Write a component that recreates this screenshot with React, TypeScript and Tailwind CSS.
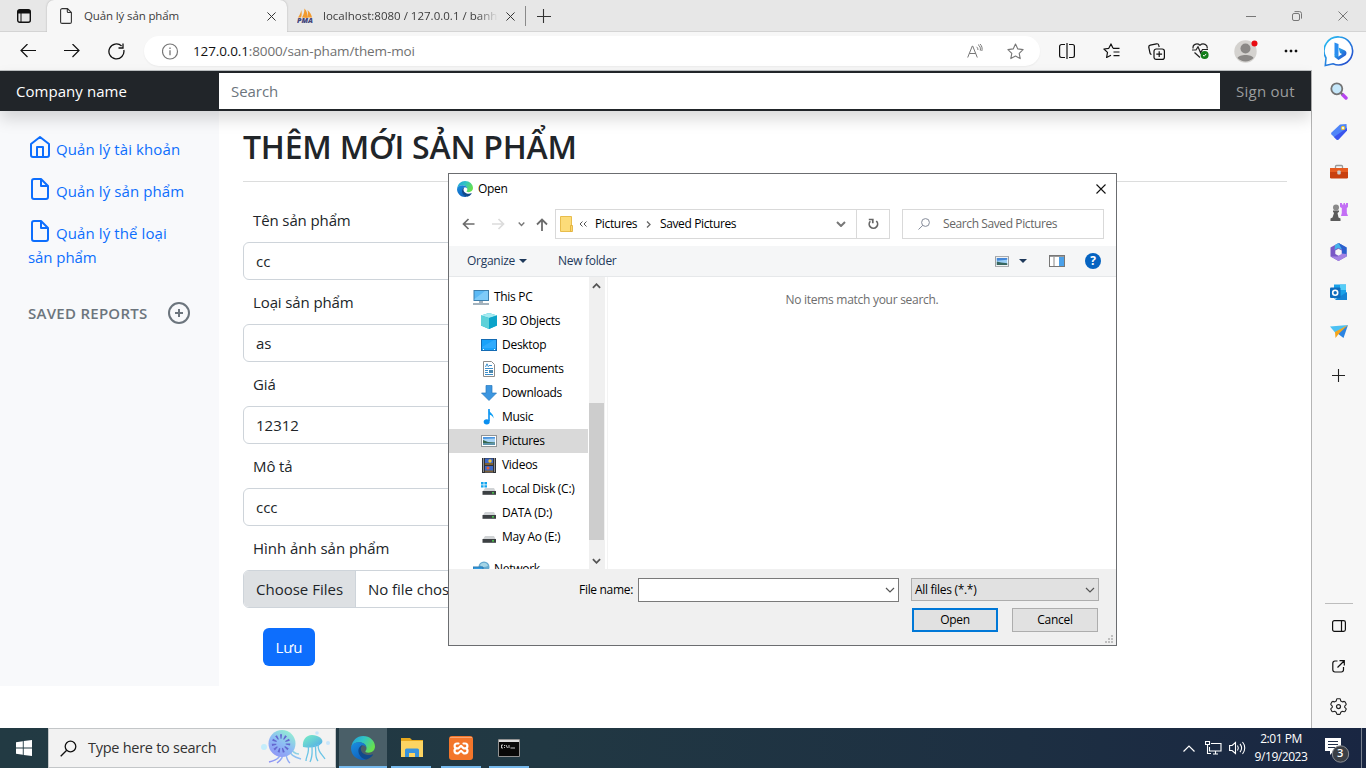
import React from "react";

type Kids = { children?: React.ReactNode };

function Svg({ w, h, box, children, c = "" }: { w: number; h: number; box?: string; c?: string } & Kids) {
  return (
    <svg width={w} height={h} viewBox={box ?? `0 0 ${w} ${h}`} fill="none" className={`block shrink-0 ${c}`}>
      {children}
    </svg>
  );
}

function EdgeLogo({ s }: { s: number }) {
  const id = `edge${s}`;
  return (
    <Svg w={s} h={s} box="0 0 24 24">
      <defs>
        <linearGradient id={`${id}a`} x1="0" y1="0" x2="1" y2=".5">
          <stop offset="0" stopColor="#1f9bdc" />
          <stop offset=".5" stopColor="#31c5c4" />
          <stop offset="1" stopColor="#66e04f" />
        </linearGradient>
        <linearGradient id={`${id}b`} x1="0" y1="0" x2=".6" y2="1">
          <stop offset="0" stopColor="#1b8fe0" />
          <stop offset="1" stopColor="#0f62bd" />
        </linearGradient>
      </defs>
      <path d="M.3 11C1.200 4.500 6 0 12 0c7 0 12 5 12 10.500 0 3.800-3 6.200-6.500 6.200-2.500 0-3.700-.9-3-1.700.8-.8 1-1.800 1-2.700 0-3.600-3.500-6-7.200-6C5 6.300 1.800 7.600.3 11z" fill={`url(#${id}a)`} />
      <path d="M0 12C.5 8 4 6.300 8.300 6.300c4 0 7.200 2.300 7.200 6-.3-1.800-2-3-3.800-3-1.700 0-3.200 1.500-3.200 3.700C8.500 18 12 22.500 15 23.600 8 25.500 0 20.500 0 12z" fill={`url(#${id}b)`} />
      <path d="M11.700 9.300C8.500 10 7 13 7.500 16c.7 4 4 7.200 8 7.500 2.500-.7 4.800-2.300 6.400-4.500.3-.5-.1-.8-.6-.6-1 .4-2 .7-3.500.7-4.500 0-8-2.600-8-6 0-1.500.7-3 1.900-3.800z" fill="#114a8b" />
    </Svg>
  );
}

function XMark({ s = 9, c = "#333", sw = 1.1 }: { s?: number; c?: string; sw?: number }) {
  return (
    <Svg w={s} h={s} box="0 0 10 10">
      <path d="M.5.5l9 9M9.500.5l-9 9" stroke={c} strokeWidth={sw} />
    </Svg>
  );
}

function TabStrip() {
  return (
    <div className="flex h-8 shrink-0 bg-[#e7e7e7] shadow-[inset_0_-1px_0_#d4d4d4]">
      <div className="flex w-[47px] items-center pl-[17px]">
        <Svg w={14} h={14}>
          <rect x=".7" y=".7" width="12.600" height="12.600" rx="2" stroke="#111" strokeWidth="1.400" />
          <path d="M1 1h12v3.500H1z" fill="#111" />
          <path d="M4 4v9" stroke="#111" strokeWidth="1" />
        </Svg>
      </div>
      <div className="flex w-[240px] items-center rounded-t-[7px] bg-[#f7f7f7] pl-[13px] shadow-[0_0_2px_#aaa]">
        <Svg w={12} h={16}>
          <path d="M2 .6h5.500L11.400 4.500v9.400a1.500 1.500 0 0 1-1.500 1.500H2.100A1.500 1.500 0 0 1 .6 13.900V2.100A1.500 1.500 0 0 1 2.100.6zM7.300.8v2.700a1 1 0 0 0 1 1h3" stroke="#333" strokeWidth="1.100" />
        </Svg>
        <span className="ml-3 w-[183px] text-[11.500px] tracking-[-0.13px] text-[#3c3c3c]">Quản lý sản phẩm</span>
        <XMark />
      </div>
      <div className="flex w-[238px] items-center pl-[10px]">
        <Svg w={17} h={16}>
          <path d="M1 9.500C3 7 4 4 4.200 2 5 5 4.800 7.500 4 9.500zM5 9.500C7 6 7.500 3 7.400.5 10 3 11 7 10.500 10zM10.500 9.500C11.300 7 11 4 10.500 2 13 4 14.500 7 15 9.500z" fill="#f29a2e" />
          <text x="0" y="15.400" fontSize="6.400" fontWeight="800" fontStyle="italic" fill="#44467c" textLength="16" lengthAdjust="spacingAndGlyphs">PMA</text>
        </Svg>
        <span className="ml-[9px] w-[175px] overflow-hidden whitespace-nowrap text-[11.500px] tracking-[0.01px] text-[#3c3c3c] [mask-image:linear-gradient(90deg,#000_88%,transparent)]">localhost:8080 / 127.0.0.1 / banh</span>
        <span className="ml-[8px]"><XMark /></span>
      </div>
      <div className="flex flex-1 items-center">
        <div className="h-5 w-px bg-[#8a8a8a]" />
        <Svg w={14} h={14} c="ml-[11px]"><path d="M6.500 0v14M0 7.500h14" stroke="#333" strokeWidth="1.100" /></Svg>
      </div>
      <div className="flex w-[138px]">
        <div className="flex w-[46px] items-center justify-center"><div className="h-px w-[10px] bg-[#777]" /></div>
        <div className="flex w-[46px] items-center justify-center">
          <Svg w={10} h={10}><rect x=".5" y="2.500" width="7" height="7" rx="1.500" stroke="#777" /><path d="M2.500.6H7.500a2 2 0 0 1 2 2v5" stroke="#777" /></Svg>
        </div>
        <div className="flex w-[46px] items-center justify-center"><XMark s={10} c="#777" sw={1} /></div>
      </div>
    </div>
  );
}

function Cell({ w, children }: { w: string } & Kids) {
  return <div className={`flex shrink-0 items-center justify-center ${w}`}>{children}</div>;
}

function Toolbar() {
  return (
    <div className="flex h-[38px] shrink-0 bg-[#f7f7f7] pl-[6px]">
      <Cell w="w-11"><Svg w={16} h={14}><path d="M16 6.500H1M7.500 0L1 6.500l6.500 6.500" stroke="#111" strokeWidth="1.200" /></Svg></Cell>
      <Cell w="w-11"><Svg w={16} h={14}><path d="M0 6.500h15M8.500 0L15 6.500l-6.500 6.500" stroke="#111" strokeWidth="1.200" /></Svg></Cell>
      <Cell w="w-11"><Svg w={17} h={17}><path d="M15.800 7A7.500 7.500 0 1 1 13.600 3M15 .5V5h-4.500" stroke="#111" strokeWidth="1.300" /></Svg></Cell>
      <div className="ml-[6px] mt-1 flex h-[30px] w-[896px] shrink-0 items-center rounded-full bg-white pl-[18px] shadow-[0_1px_2px_rgba(0,0,0,0.05)]">
        <Svg w={17} h={17}><circle cx="8" cy="8.500" r="7.500" stroke="#777" strokeWidth="1.200" /><path d="M8 7.300v5M8 4.500v1.500" stroke="#777" strokeWidth="1.300" /></Svg>
        <span className="ml-[14px] flex-1 text-[13.500px] tracking-[-0.13px] text-[#707070]"><span className="text-[#111]">127.0.0.1</span>:8000/san-pham/them-moi</span>
        <Cell w="w-10"><Svg w={16} h={15}><path d="M.7 13.500L5.300 2h.4l4.600 11.500M2.300 9.500h6.400M9.500 2.800c1 .8 1.500 2 1.400 3.200M11 .6c2 1.300 2.800 3.500 2.300 6M13 0c2 1.800 2.600 4.600 1.800 7" stroke="#777" strokeWidth="1" /></Svg></Cell>
        <Cell w="w-10"><Svg w={17} h={17}><path d="M8.500 1l2.300 4.900 5.300.7-3.900 3.700 1 5.300-4.700-2.600-4.700 2.600 1-5.300L.9 6.600l5.300-.7z" stroke="#777" strokeLinejoin="round" strokeWidth="1.100" /></Svg></Cell>
        <span className="w-[5px]" />
      </div>
      <div className="ml-[4px] flex">
        <Cell w="w-[45px]"><Svg w={16} h={16}><path d="M6 1.500H2.500A1.900 1.900 0 0 0 .6 3.400v9.200a1.900 1.900 0 0 0 1.900 1.900H6M10 1.500h3.500a1.900 1.900 0 0 1 1.900 1.900v9.200a1.900 1.900 0 0 1-1.900 1.900H10M8 0v16" stroke="#111" strokeWidth="1.200" /></Svg></Cell>
        <Cell w="w-[45px]"><Svg w={17} h={16}><path d="M10 5.300L8 .9 5.800 5.300.9 6l3.600 3.400-.9 5.100L8 12.200M10 5.300h6.500M10.500 9h6M10.500 12.700h6" stroke="#111" strokeLinejoin="round" strokeWidth="1.200" /></Svg></Cell>
        <Cell w="w-[44px]"><Svg w={17} h={17}><rect x="6" y="6" width="10.400" height="10.400" rx="2.200" stroke="#111" strokeWidth="1.200" /><path d="M11.200 8.300v5.800M8.300 11.200h5.800M3.500 11.500A2 2 0 0 1 2 10L.8 4.500A2 2 0 0 1 2.300 2.200L8.500.8A2 2 0 0 1 10.800 2.400L11.200 4" stroke="#111" strokeWidth="1.200" /></Svg></Cell>
        <Cell w="w-[45px]"><Svg w={17} h={18}><path d="M1.200 6.500C0 2.500 5 .5 8 3.200c3-2.700 8.200-.7 7 3.300M0 8h4l2-3.200 2.600 6L10.500 7.500H16M2.500 10.500L8 15.500" stroke="#222" strokeWidth="1.200" /><circle cx="12.600" cy="13" r="4" fill="#137c19" /><path d="M11 13.200l1.200 1 2-2.300" stroke="#fff" strokeWidth="1" /></Svg></Cell>
        <Cell w="w-[45px]"><Svg w={24} h={24}><circle cx="11.500" cy="12.500" r="11.200" fill="#d4d2cf" /><circle cx="11.500" cy="9.500" r="5" fill="#8a8886" /><path d="M3.500 19c1.500-4 14.500-4 16 0a11 11 0 0 1-16 0z" fill="#8a8886" /><circle cx="20.500" cy="4.500" r="3" fill="#e90b12" /></Svg></Cell>
        <Cell w="w-[46px]"><Svg w={14} h={4}><path d="M1 1h2v2H1zM6 1h2v2H6zM11 1h2v2h-2z" fill="#111" stroke="#111" strokeWidth=".5" /></Svg></Cell>
      </div>
    </div>
  );
}

function BrowserSidebar() {
  return (
    <div className="z-10 flex w-[54px] shrink-0 flex-col items-center bg-[#f7f7f7] pr-px">
      <Cell w="h-[38px]">
        <Svg w={31} h={31} c="ml-px">
          <defs><linearGradient id="bg1" x1="0" y1="0" x2="1" y2="1"><stop stopColor="#27c4f5" /><stop offset="1" stopColor="#2541c9" /></linearGradient></defs>
          <path d="M15.500 1A14 14 0 1 1 9 27.800L1.300 29.500 2 22A14 14 0 0 1 15.500 1z" fill="#fff" stroke="url(#bg1)" strokeWidth="1.600" />
          <path d="M10.500 6.500l4 1.500v13l-4-2.500z" fill="#2a8df0" />
          <path d="M14.500 11.500l6.500 3c1.800 1 2 3.500.5 5L14.500 24 10.500 21v-3l4 2.500 3.500-2.500-2-1z" fill="url(#bg1)" />
        </Svg>
      </Cell>
      <Cell w="h-[42px]"><Svg w={18} h={18}><path d="M12.500 12.500l3.500 3.500" stroke="#b743f1" strokeWidth="3.400" strokeLinecap="round" /><path d="M10 10l2.500 2.500" stroke="#777" strokeWidth="2" /><circle cx="6.800" cy="6.800" r="5.500" fill="#c5e7fa" stroke="#747474" strokeWidth="1.800" /></Svg></Cell>
      <Cell w="h-[40px]"><Svg w={18} h={18}><path d="M10 1.500L16.500 1 17 7.500 8.500 16.500a1.500 1.500 0 0 1-2 0L1.500 11.500a1.500 1.500 0 0 1 0-2z" fill="#4f85f8" /><path d="M4 14L17 5v2.500L8.500 16.500a1.500 1.500 0 0 1-2 0z" fill="#3b55ee" /><circle cx="13" cy="5" r="1.700" fill="#eee" stroke="#eec72b" /></Svg></Cell>
      <Cell w="h-[40px]"><Svg w={18} h={16}><path d="M5.500 4V2.500A1 1 0 0 1 6.500 1.500h5a1 1 0 0 1 1 1V4" stroke="#999" strokeWidth="1.300" /><rect x="0" y="4" width="18" height="10.500" rx="1.200" fill="#c8400f" /><path d="M0 4h18v4H0z" fill="#e65b20" /><rect x="7.300" y="6.500" width="3.400" height="4" rx="1" fill="#ccc" /></Svg></Cell>
      <Cell w="h-[40px]"><Svg w={18} h={18}><path d="M10 0h2v1.500h1.500V0H15v1.500h1V0h2v4l-1.200 1v5l1.200 3h-7l.8-3V5L10 4z" fill="#c36ff5" /><circle cx="6" cy="4.500" r="3" fill="#8a8a8a" /><path d="M3 7.500h6v1.200L7.500 10l1 4.500 2 1V18H.5v-2.500l2-1L4 10 3 8.700z" fill="#5b5b5b" /></Svg></Cell>
      <Cell w="h-[40px]">
        <Svg w={17} h={18}>
          <path d="M8.500 0L16.500 4.500v9L8.500 18l-8-4.500v-9z" fill="#7a58c6" />
          <path d="M5 2L8.500 0l8 4.500v5L12 11V6.500L8 5 4.500 7z" fill="#45b2ea" />
          <path d="M8.500 0l8 4.500v9L12 11V6.500z" fill="#2d5fcd" />
          <path d="M.8 13.600L8.500 18l8-4.500V11L12 10.500l-4 3z" fill="#a583e4" />
          <path d="M8.500 5.700l3.200 1.800v3.500l-3.200 1.800L5.300 11V7.500z" fill="#f7f7f7" />
        </Svg>
      </Cell>
      <Cell w="h-[40px]"><Svg w={17} h={17}><path d="M4 .5h12v14H4z" fill="#1aa1e8" /><path d="M10 .5h6v5.500h-6z" fill="#56cdf7" /><path d="M5 15.500L17 8v8H6z" fill="#1583d4" /><rect x="0" y="3.500" width="10.500" height="10.500" rx="1" fill="#0f6cbd" /><circle cx="5.200" cy="8.700" r="2.500" stroke="#fff" strokeWidth="1.600" /></Svg></Cell>
      <Cell w="h-[38px]"><Svg w={18} h={15}><path d="M0 2.500L18 1 5.500 9z" fill="#4cc1f3" /><path d="M18 1l-4.500 13L7 9z" fill="#2b84e2" /><path d="M18 1L5 8l.5 6L9 9.500z" fill="#f4a51c" /></Svg></Cell>
      <Cell w="h-[50px]"><Svg w={13} h={13}><path d="M6.500 0v13M0 6.500h13" stroke="#222" strokeWidth="1.100" /></Svg></Cell>
      <div className="flex-1" />
      <div className="h-px w-7 bg-[#bdbdbd]" />
      <Cell w="h-[44px]"><Svg w={14} h={12}><rect x=".6" y=".6" width="12.800" height="10.800" rx="1.800" stroke="#111" strokeWidth="1.200" /><path d="M9.500.5v11" stroke="#111" strokeWidth="1.200" /></Svg></Cell>
      <Cell w="h-[36px]"><Svg w={13} h={13}><path d="M5.500 1H3A2.300 2.300 0 0 0 .8 3.200v6.600A2.300 2.300 0 0 0 3 12h6.300a2.300 2.300 0 0 0 2.200-2.200V7M7.500.7h4.800v4.800M12 1L5.500 7.500" stroke="#111" strokeWidth="1.200" /></Svg></Cell>
      <Cell w="h-[44px]"><Svg w={17} h={17}><path d="M6.700 1.200l.5-.5h2.600l.5.5.5 1.800 1.500.9 1.900-.5.8.3 1.200 2.200-.1.800L14.700 8.100v1.200l1.400 1.300.1.700-1.200 2.200-.8.300-1.900-.5-1.500.9-.5 1.700-.5.5H7.200l-.5-.5-.5-1.700-1.500-.9-1.900.5-.8-.3-1.200-2.200.1-.7 1.400-1.300V8.100L.9 6.700l-.1-.8L2 3.700l.8-.3 1.900.5L6.200 3z" stroke="#222" strokeLinejoin="round" strokeWidth="1.100" /><circle cx="8.500" cy="8.600" r="2" stroke="#222" strokeWidth="1.200" /></Svg></Cell>
    </div>
  );
}

function HomeIcon() {
  return <Svg w={24} h={24} c="mr-1 inline-block align-[-4px]"><path d="M3 9l9-7 9 7v11a2 2 0 0 1-2 2H5a2 2 0 0 1-2-2zM9 22V12h6v10" stroke="#0d6efd" strokeWidth="2" strokeLinejoin="round" /></Svg>;
}

function FileIcon() {
  return <Svg w={24} h={24} c="mr-1 inline-block align-[-4px]"><path d="M13 2H6a2 2 0 0 0-2 2v16a2 2 0 0 0 2 2h12a2 2 0 0 0 2-2V9zM13 2v7h7" stroke="#0d6efd" strokeWidth="2" strokeLinejoin="round" /></Svg>;
}

function Field({ label, value }: { label: string; value: string }) {
  return (
    <div className="h-[82px]">
      <div className="flex h-[44px] items-center pl-[10px] text-[15px] tracking-[-0.11px]">{label}</div>
      <div className="flex h-[38px] items-center rounded-md border border-[#ced4da] px-3 text-[15px]">{value}</div>
    </div>
  );
}

function WebPage() {
  return (
    <div className="flex w-[1312px] flex-col border-r border-t border-[#b5b5b5] border-t-[#bdc1c3] bg-white text-[#212529]">
      <div className="z-10 flex h-10 shrink-0 items-stretch bg-[#212529] py-[2px] shadow-[0_8px_16px_rgba(0,0,0,0.15)]">
        <div className="flex w-[219px] items-center pl-4 text-[15px] tracking-[0.05px] text-white">Company name</div>
        <div className="flex w-[1001px] items-center bg-white pl-3 text-[15px] tracking-[-0.05px] text-[#6c757d]">Search</div>
        <div className="flex items-center pl-4 text-[15px] tracking-[0.25px] text-[#9b9d9e]">Sign out</div>
      </div>
      <div className="flex flex-1">
        <div className="h-[575px] w-[219px] bg-[#f8f9fb] pl-7 pt-[24px] text-[15px] leading-6 tracking-[0.1px] text-[#0d6efd]">
          <div className="h-[42px] whitespace-nowrap"><HomeIcon />Quản lý tài khoản</div>
          <div className="h-[42px] whitespace-nowrap"><FileIcon />Quản lý sản phẩm</div>
          <div className="h-[66px]"><FileIcon />Quản lý thể loại<br /><span className="tracking-[-0.06px]">sản phẩm</span></div>
          <div className="mt-[16px] flex h-6 items-center font-semibold tracking-[0.27px] text-[#6c757d]">
            <span className="w-[139px] whitespace-nowrap">SAVED REPORTS</span>
            <Svg w={24} h={24}><circle cx="12" cy="12" r="10" stroke="#6c757d" strokeWidth="2" /><path d="M12 8v8M8 12h8" stroke="#6c757d" strokeWidth="2" /></Svg>
          </div>
        </div>
        <div className="flex-1 px-6 pt-4">
          <div className="h-[55px] border-b border-[#dcdddd] text-[32px] font-semibold leading-[40px] tracking-[-0.22px]">THÊM MỚI SẢN PHẨM</div>
          <div className="w-[522px] pt-4">
            <Field label="Tên sản phẩm" value="cc" />
            <Field label="Loại sản phẩm" value="as" />
            <Field label="Giá" value="12312" />
            <Field label="Mô tả" value="ccc" />
            <div className="flex h-[44px] items-center pl-[10px] text-[15px] tracking-[-0.03px]">Hình ảnh sản phẩm</div>
            <div className="flex h-[38px] items-stretch overflow-hidden rounded-md border border-[#ced4da] text-[15px]">
              <div className="flex w-[112px] items-center border-r border-[#ced4da] bg-[#dde0e3] pl-3">Choose Files</div>
              <div className="flex items-center pl-[12px] tracking-[-0.05px]">No file chosen</div>
            </div>
            <div className="ml-5 mt-5 flex h-[38px] w-[52px] items-center justify-center rounded-md bg-[#0d6efd] text-[15px] text-white">Lưu</div>
          </div>
        </div>
      </div>
    </div>
  );
}

function Photo() {
  return <Svg w={16} h={12}><rect x=".5" y=".5" width="15" height="11" fill="#fff" stroke="#8f9396" /><path d="M2 2h12v8H2z" fill="#a9d4f5" /><path d="M2 2h12v1.500L2 4z" fill="#4c96e0" /><path d="M2 5l5 2 7 .5v1H2z" fill="#37664f" /><path d="M2 8.300h12V10H2z" fill="#5b93ac" /></Svg>;
}

function Drive({ win = false }: { win?: boolean }) {
  return <Svg w={16} h={14}>{win && <path d="M0 0h2.600v2.400H0zM3.400 0H6v2.400H3.400zM0 3.200h2.600v2.400H0zM3.400 3.200H6v2.400H3.400z" fill="#13a5ee" />}<path d="M4 6h9l1.500 3H2z" fill="#d0d3d5" /><path d="M1.500 9h13.500v3.800H1.500z" fill="#3c4043" /><path d="M11 10.300h2v1.300h-2z" fill="#4be04b" /></Svg>;
}

const tree: [string, React.ReactNode][] = [
  ["3D Objects", <Svg w={16} h={16}><path d="M8 0l8 2.500v10L8 16 0 12.500v-10z" fill="#18b0d0" /><path d="M0 2.500L8 0l8 2.500L8 5z" fill="#a4eaf0" /><path d="M0 2.500L8 5v11L0 12.500z" fill="#5ed1d9" /><path d="M8 5l8-2.500v10L8 16z" fill="#0ba3c9" /></Svg>],
  ["Desktop", <Svg w={16} h={12}><rect x=".5" y=".5" width="15" height="11" fill="#19a2fa" stroke="#146bb3" /><path d="M1 8L13 1h2v8H1z" fill="#45b4ff" opacity=".5" /><path d="M2 10.500h1M13 10.500h1" stroke="#fff" /></Svg>],
  ["Documents", <Svg w={12} h={16}><path d="M.5.5h8L11.500 3.500v12H.5z" fill="#fff" stroke="#8c8c8c" /><path d="M2.500 6L4 2.800 5.500 6M6 4.500h3M2 7.500h8M2 9.500h3M2 11.500h3M2 13.500h8" stroke="#3b8dc9" /><path d="M6 9h4v3H6z" fill="#4b87ad" /></Svg>],
  ["Downloads", <Svg w={16} h={16}><path d="M5 .5h6V8h4.500L8 15.500.5 8H5z" fill="#3c96e0" stroke="#2778bd" strokeWidth=".7" /></Svg>],
  ["Music", <Svg w={12} h={16}><path d="M6 0v12" stroke="#0a8ff0" strokeWidth="1.600" /><ellipse cx="3.700" cy="12.800" rx="3" ry="2.600" fill="#0a8ff0" /><path d="M5.500 0c.5 4 5.500 4 5 9.500C10 7 8 6 6 5.500z" fill="#0a9ef5" /></Svg>],
  ["Pictures", <Photo />],
  ["Videos", <Svg w={14} h={15}><path d="M0 0h14v15H0z" fill="#303236" /><path d="M3 .5h8v6.500H3zM3 8h8v6.500H3z" fill="#3c68c8" /><path d="M3 5h8v2H3zM3 12.500h8v2H3z" fill="#7b6035" /><circle cx="8" cy="3" r="1.700" fill="#f3c535" /><circle cx="6" cy="10" r="1.500" fill="#df5e37" /><path d="M1.500.5v14M12.500.5v14" stroke="#eee" strokeWidth="1" strokeDasharray="1 1" /></Svg>],
  ["Local Disk (C:)", <Drive win />],
  ["DATA (D:)", <Drive />],
  ["May Ao (E:)", <Drive />],
];

function Chev({ w = 9, c = "#555", up = false, sw = 1.6 }: { w?: number; c?: string; up?: boolean; sw?: number }) {
  return <Svg w={w} h={6} box="0 0 10 6"><path d={up ? "M1 5l4-4 4 4" : "M1 1l4 4 4-4"} stroke={c} strokeWidth={sw} /></Svg>;
}

function OpenDialog() {
  return (
    <div className="absolute left-[448px] top-[173px] z-20 flex h-[473px] w-[669px] flex-col border border-[#6b6d70] bg-white text-[12px] tracking-[-0.28px] text-black">
      <div className="flex h-[29px] shrink-0 items-center pl-2 pr-[10px]">
        <EdgeLogo s={16} />
        <span className="ml-[5px] flex-1">Open</span>
        <XMark s={10} c="#111" sw={1.1} />
      </div>
      <div className="flex h-[43px] shrink-0 pb-[7px] pt-[6px]">
        <div className="flex w-[106px] items-center pl-[13px]">
          <Svg w={13} h={12}><path d="M12.500 6H1.500M6.500 1l-5 5 5 5" stroke="#6c6c6c" strokeWidth="1.700" /></Svg>
          <Svg w={13} h={12} c="ml-[17px]"><path d="M0 6h11.500M6.500 1l5 5-5 5" stroke="#dcdcdc" strokeWidth="1.700" /></Svg>
          <span className="ml-[13px]"><Chev w={7} c="#777" sw={2} /></span>
          <Svg w={12} h={13} c="ml-[11px]"><path d="M6 13V1.500M1 6.500l5-5 5 5" stroke="#6c6c6c" strokeWidth="1.800" /></Svg>
        </div>
        <div className="flex w-[335px] border border-[#d9d9d9]">
          <div className="flex w-[302px] items-center border-r border-[#d9d9d9] pl-1 pr-[10px]">
            <Svg w={14} h={16}><path d="M.5.5h11v15H.5z" fill="#fcdc79" stroke="#e8bd4c" /><path d="M10.500 9.500h2v6h-2z" fill="#fbd76b" stroke="#e0ac34" strokeWidth=".8" /></Svg>
            <Svg w={8} h={6} c="ml-[5px]"><path d="M3.500.5L1 3l2.500 2.500M7.500.5L5 3l2.500 2.500" stroke="#555" /></Svg>
            <span className="ml-2 w-[42px] whitespace-nowrap tracking-[-0.35px]">Pictures</span>
            <Svg w={5} h={7} c="mx-[9px]"><path d="M1 .5l3 3-3 3" stroke="#666" strokeWidth="1.300" /></Svg>
            <span className="flex-1 tracking-[-0.38px]">Saved Pictures</span>
            <Chev w={10} c="#777" sw={2} />
          </div>
          <Cell w="w-8"><Svg w={11} h={12}><path d="M8.300 3A4.200 4.200 0 1 1 2.300 3.200M.8 1.500h4v3.800" stroke="#666" strokeWidth="1.700" /></Svg></Cell>
        </div>
        <div className="ml-3 flex w-[202px] items-center border border-[#d9d9d9] pl-[15px] text-[#666]">
          <Svg w={12} h={12}><circle cx="7.500" cy="4.500" r="3.900" stroke="#858b99" /><path d="M4.800 7.300L.5 11.500" stroke="#858b99" /></Svg>
          <span className="ml-[13px] tracking-[-0.4px]">Search Saved Pictures</span>
        </div>
      </div>
      <div className="flex h-[31px] shrink-0 items-center border-b border-[#e6e8ea] bg-[#f5f6f7] pl-[18px] text-[#1e395b]">
        <span className="w-[52px]">Organize</span>
        <Svg w={8} h={4}><path d="M0 0h8L4 4z" fill="#1e395b" /></Svg>
        <span className="ml-[31px] w-[437px] tracking-[-0.3px]">New folder</span>
        <Svg w={14} h={11} box="0 0 16 12"><rect x=".5" y=".5" width="15" height="11" fill="#fff" stroke="#8f9396" /><path d="M2 2h12v8H2z" fill="#9bcef5" /><path d="M2 2h12v2L2 5z" fill="#4487d8" /><path d="M2 6l5 1 7 1v2H2z" fill="#37665f" /></Svg>
        <Svg w={8} h={4} c="ml-[10px]"><path d="M0 0h8L4 4z" fill="#1e395b" /></Svg>
        <Svg w={16} h={12} c="ml-[22px]"><rect x=".5" y=".5" width="15" height="11" fill="#fff" stroke="#777" /><path d="M1 1.500h14" stroke="#999" /><path d="M5 2v9" stroke="#888" /><path d="M10 2h5v9h-5z" fill="#4ba1ea" /></Svg>
        <div className="ml-5 flex size-4 items-center justify-center rounded-full bg-[#0563c1] text-[12px] font-bold text-white">?</div>
      </div>
      <div className="flex h-[292px] shrink-0">
        <div className="h-full w-[139px] shrink-0 overflow-hidden pt-2">
          <div className="flex h-6 items-center pl-6">
            <Svg w={16} h={15}><rect x="1" y=".5" width="14.500" height="10" fill="#5bb9f5" stroke="#3c7eac" /><path d="M1.500 9L12 1h3v9H1.500z" fill="#8dd3fb" opacity=".7" /><path d="M6 12h4M0 14h16" stroke="#8599a8" strokeWidth="1.300" /></Svg>
            <span className="ml-[5px] tracking-[-0.3px]">This PC</span>
          </div>
          {tree.map(([name, icon]) => (
            <div key={name} className={`flex h-6 items-center pl-8 ${name === "Pictures" ? "bg-[#d9d9d9]" : ""}`}>
              <div className="flex w-4 justify-center">{icon}</div>
              <span className="ml-[5px] whitespace-nowrap">{name}</span>
            </div>
          ))}
          <div className="mt-2 flex h-6 items-center pl-6">
            <Svg w={17} h={16}><circle cx="11" cy="6" r="5.500" fill="#65a9cf" /><path d="M7 4c2-3 7-3 8 1-3 1-6 2-8-1z" fill="#a4d4e6" /><path d="M0 6h10v8H0z" fill="#339be0" stroke="#2b78af" /></Svg>
            <span className="ml-[4px]">Network</span>
          </div>
        </div>
        <div className="ml-px flex w-[16px] shrink-0 flex-col items-center bg-[#f0f0f0]">
          <div className="flex h-[126px] w-[15px] shrink-0 justify-center self-start pt-[6px]"><Chev c="#555" up sw={2} /></div>
          <div className="h-[137px] w-[15px] shrink-0 self-start bg-[#cdcdcd]" />
          <div className="flex w-[15px] flex-1 justify-center self-start pt-[18px]"><Chev c="#555" sw={2} /></div>
        </div>
        <div className="ml-[2px] flex-1 border-l border-[#f3f3f3] pt-[14px] text-center text-[#6d6d6d]"><span>No items match your search.</span></div>
      </div>
      <div className="flex flex-1 flex-col bg-[#f0f0f0]">
        <div className="flex pt-[9px]">
          <span className="w-[189px] pr-[5px] pt-[3px] text-right tracking-[-0.32px]">File name:</span>
          <div className="flex h-6 w-[261px] items-center justify-end border border-[#7a7a7a] bg-white pr-[3px]"><Chev w={10} sw={1.200} /></div>
          <div className="ml-3 flex h-[23px] w-[188px] items-center justify-between border border-[#adadad] bg-[#e1e1e1] pl-[3px] pr-[3px]"><span className="tracking-[-0.3px]">All files (*.*)</span><Chev w={10} sw={1.200} /></div>
        </div>
        <div className="flex pl-[463px] pt-[6px]">
          <div className="flex h-6 w-[86px] items-center justify-center border-2 border-[#0078d7] bg-[#e1e1e1]">Open</div>
          <div className="ml-[14px] flex h-6 w-[86px] items-center justify-center border border-[#adadad] bg-[#e1e1e1]">Cancel</div>
        </div>
        <Svg w={8} h={8} c="ml-auto mr-[3px] mt-[3px]"><path d="M6 0h2v2H6zM3 3h2v2H3zM6 3h2v2H6zM0 6h2v2H0zM3 6h2v2H3zM6 6h2v2H6z" fill="#bfbfbf" /></Svg>
      </div>
    </div>
  );
}

function TaskApp({ c, bar, children }: { c: string; bar: string } & Kids) {
  return (
    <div className={`flex h-10 shrink-0 flex-col items-center ${c}`}>
      <div className="flex flex-1 items-center pt-[1px]">{children}</div>
      <div className={`h-[2px] bg-[#76b9ed] ${bar}`} />
    </div>
  );
}

function Taskbar() {
  return (
    <div className="flex h-10 shrink-0 bg-[linear-gradient(90deg,#223a43_0%,#213843_40%,#1d2f42_75%,#192642_100%)]">
      <Cell w="w-12"><Svg w={16} h={16}><path d="M0 2.200L6.800 1.200v6.300H0zM7.700 1.100L16 0v7.500H7.700zM0 8.400h6.800v6.400L0 13.800zM7.700 8.400H16V16l-8.300-1.100z" fill="#fff" /></Svg></Cell>
      <div className="flex w-[288px] shrink-0 items-center border border-[#c3c6c8] bg-[#f2f2f2] pl-[11px]">
        <Svg w={17} h={17}><circle cx="10.500" cy="6.500" r="5.300" stroke="#111" strokeWidth="1.300" /><path d="M6.700 10.300L.7 16.300" stroke="#111" strokeWidth="1.300" /></Svg>
        <span className="ml-[11px] w-[173px] shrink-0 text-[14.500px] tracking-[-0.27px] text-[#333]">Type here to search</span>
        <Svg w={74} h={38}>
          <defs>
            <linearGradient id="jf" x1=".2" y1="1" x2=".8" y2="0"><stop stopColor="#8f94f5" /><stop offset=".5" stopColor="#8dbcf5" /><stop offset="1" stopColor="#93f2cf" /></linearGradient>
            <linearGradient id="jg" x1="0" y1="0" x2="1" y2="1"><stop stopColor="#79f0c4" /><stop offset="1" stopColor="#51a7ea" /></linearGradient>
          </defs>
          <circle cx="3" cy="18" r="3" fill="#c4edfb" /><circle cx="56" cy="4" r="1.800" fill="#c7e5fb" /><circle cx="67" cy="14" r="2" fill="#c7e5fb" />
          <path d="M20 20c0 8-3 11-12 13M22 20c1 8-2 11-6 14M24 20c1 8 2 12 5 14M27 19c2 7 6 9 13 11M29 17c2 6 6 8 9 8" stroke="url(#jf)" strokeWidth="1.500" />
          <circle cx="21" cy="14.500" r="13.500" fill="url(#jf)" />
          <circle cx="20" cy="14.500" r="7" stroke="#6367cf" strokeWidth="4.500" strokeDasharray="1.600 2.400" />
          <path d="M42 18c-1-7 3-12 9-12s12 4 10 8c-5 5-11 5-19 4z" fill="url(#jg)" />
          <path d="M47 17c2 6-2 10-2 15M51 17c0 7 1 10-2 16M54 16c2 7-1 11 3 16M57 15c0 8 3 9 7 15" stroke="#69c4e6" strokeWidth="1.300" />
        </Svg>
      </div>
      <TaskApp c="ml-[3px] w-12 bg-[#4a5f68]" bar="w-12"><EdgeLogo s={24} /></TaskApp>
      <TaskApp c="w-12" bar="w-10">
        <Svg w={22} h={19} c="ml-px"><path d="M0 0h9l2 2h11v17H0z" fill="#e8a91e" /><path d="M0 3h22v16H0z" fill="#fcd462" /><path d="M4 19v-7a1.500 1.500 0 0 1 1.500-1.500h11A1.500 1.500 0 0 1 18 12v7h-4v-4H8v4z" fill="#3893de" /></Svg>
      </TaskApp>
      <TaskApp c="w-[51px]" bar="w-10">
        <Svg w={24} h={24}>
          <rect width="24" height="24" rx="3" fill="#f3762b" />
          <path d="M1 1.500h22" stroke="#f8a573" />
          <path d="M9.500 7.500H8a2.400 2.400 0 0 0 0 4.800 2.500 2.500 0 0 0 0 5h1.300L12 14.800l2.700 2.500H16a2.500 2.500 0 0 0 0-5 2.400 2.400 0 0 0 0-4.800h-1.500M8 12.300h1.500L12 9.800l2.500 2.500H16" stroke="#fff" strokeWidth="2.200" strokeLinecap="round" strokeLinejoin="round" />
        </Svg>
      </TaskApp>
      <TaskApp c="w-[46px]" bar="w-10">
        <Svg w={22} h={18}><path d="M.5.5h21v17H.5z" fill="#080808" stroke="#929292" /><path d="M1 1h20v2H1z" fill="#ddd" /><path d="M5 6H3.500v3H5M6.500 6v1M6.500 8v1M8 6l1.500 3M11 6v3M12.500 9H17" stroke="#ddd" strokeWidth=".9" /></Svg>
      </TaskApp>
      <div className="flex-1" />
      <div className="flex w-[178px] items-center text-white">
        <Svg w={12} h={7}><path d="M.5 6.500L6 1l5.500 5.500" stroke="#fff" strokeWidth="1.200" /></Svg>
        <Svg w={17} h={14} c="ml-[10px]"><path d="M6 2.500h10v7.500H4.500V6M8 13h5M10.500 10v3M.5.500h4v3h-4zM2.500 3.500V12.500H6" stroke="#fff" strokeWidth="1.100" /></Svg>
        <Svg w={17} h={14} c="ml-[7px]"><path d="M.6 4.500h2.500L6.500 1.500v11L3.100 9.500H.6zM8.500 4.500c1 1.500 1 3.500 0 5M11 2.800c2 2.600 2 5.800 0 8.400M13.500 1c3 3.500 3 8.500 0 12" stroke="#fff" strokeWidth="1.100" /></Svg>
        <div className="ml-[7px] w-[56px] text-center text-[12px] leading-[18px] tracking-[-0.45px]">2:01 PM<br />9/19/2023</div>
        <div className="relative ml-[16px] mt-[6px]">
          <Svg w={25} h={26}><path d="M0 0h16v13H8.500L5 17v-4H0z" fill="#fff" /><path d="M3 3.500h10M3 6.500h10M3 9.500h7" stroke="#22304a" /><circle cx="15.500" cy="16" r="8.200" fill="#3b3f45" stroke="#8c8f94" /></Svg>
          <span className="absolute left-[12px] top-[7px] text-[11px] font-semibold">3</span>
        </div>
      </div>
      <div className="w-[5px] border-l border-[#78808e]" />
    </div>
  );
}

export default function App() {
  return (
    <div className="relative flex h-[768px] w-[1366px] flex-col overflow-hidden bg-white font-['Open_Sans','Noto_Sans',sans-serif]">
      <TabStrip />
      <div className="flex flex-1">
        <div className="flex w-[1312px] flex-col">
          <Toolbar />
          <div className="flex flex-1"><WebPage /></div>
        </div>
        <BrowserSidebar />
      </div>
      <Taskbar />
      <OpenDialog />
    </div>
  );
}
